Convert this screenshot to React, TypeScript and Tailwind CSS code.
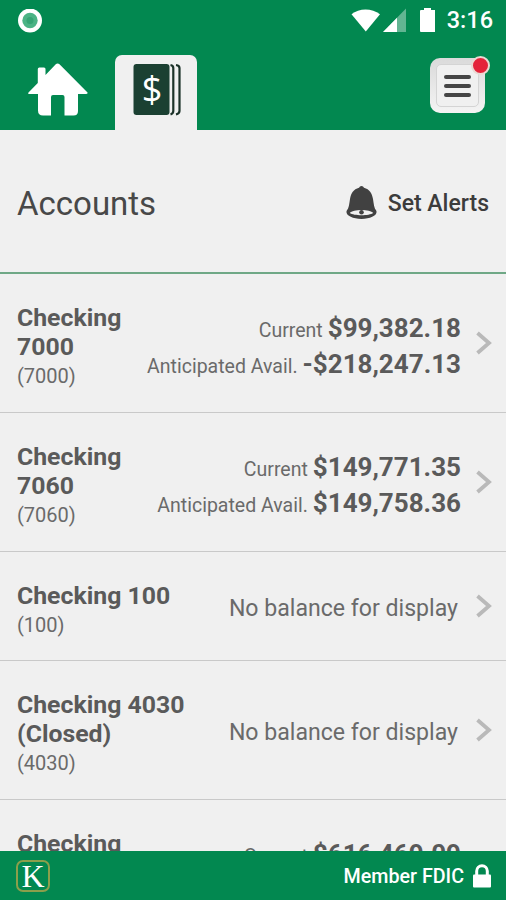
type Balance = { label: string; amount: string };

type Account = {
  name: string[];
  number: string;
  balances?: Balance[];
};

const accounts: Account[] = [
  {
    name: ["Checking", "7000"],
    number: "7000",
    balances: [
      { label: "Current", amount: "$99,382.18" },
      { label: "Anticipated Avail.", amount: "-$218,247.13" },
    ],
  },
  {
    name: ["Checking", "7060"],
    number: "7060",
    balances: [
      { label: "Current", amount: "$149,771.35" },
      { label: "Anticipated Avail.", amount: "$149,758.36" },
    ],
  },
  { name: ["Checking 100"], number: "100" },
  { name: ["Checking 4030", "(Closed)"], number: "4030" },
  {
    name: ["Checking"],
    number: "",
    balances: [{ label: "Current", amount: "$616,469.09" }],
  },
];

function StatusBar() {
  return (
    <div className="flex h-[42px] items-center pl-[18px] pr-[13px] text-white">
      <svg width="25" height="25" viewBox="0 0 25 25">
        <circle cx="12" cy="11.500" r="12" fill="#fff" />
        <circle cx="12" cy="11.500" r="7.700" fill="#4bb385" />
        <circle cx="12" cy="11.500" r="3.500" fill="#36a474" />
      </svg>
      <svg className="ml-auto" width="86" height="26" viewBox="0 0 86 26" fill="#fff">
        <path d="M2.500 6.200C10-.2 23-.2 31 6.200L16.800 23.500z" />
        <path d="M57 .5v23.500H34z" fillOpacity=".38" />
        <path d="M48 9.700V24H34z" />
        <path d="M75 0h7v2h3.500q1 0 1 1V23q0 1-1 1H72q-1 0-1-1V3q0-1 1-1H75z" />
      </svg>
      <span className="ml-[12px] text-[23.500px] leading-none font-medium">3:16</span>
    </div>
  );
}

function NavTabs() {
  return (
    <nav className="flex h-[88px] items-end">
      <button className="flex h-[76px] w-[115px] justify-center pt-[9px]">
        <svg width="60" height="53" viewBox="0 0 60 53" fill="#fff">
          <path d="M28 .9Q30 0 31.500 1.200L59.500 29.500Q60 31 58 31H50v17q0 4.500-4.500 4.500H36.500V34q0-2-2-2H25q-2 0-2 2v18.500h-8q-5 0-5-5V31H1q-1.500-.4-.5-1.500L9.800 20V6q0-1.500 1.500-1.500H16q1.500 0 1.500 1.500v6z" />
        </svg>
      </button>
      <button className="mt-auto flex h-[75px] w-[82px] justify-center rounded-t-[7px] bg-[#f0f0f0] pt-[8px]">
        <svg className="ml-px" width="48" height="53" viewBox="0 0 48 53">
          <rect x=".5" y="1" width="36" height="51" rx="3" fill="#1b4032" />
          <path d="M37.500 2q2.800.5 2.800 3v43q0 2.500-2.800 3.500M43 2q3.500.5 3.500 3v43q0 2.500-3.500 3.500" fill="none" stroke="#1c3229" strokeWidth="2.200" />
          <text x="19" y="38.500" textAnchor="middle" fill="#fff" fontSize="36" fontFamily="'Open Sans', sans-serif">
            $
          </text>
        </svg>
      </button>
      <button className="relative mr-[21px] mb-[17px] ml-auto flex size-[55px] items-center justify-center rounded-[10px] bg-linear-to-b from-[#dadada] to-[#f4f4f4]">
        <span className="flex h-[43px] w-[43px] flex-col items-center justify-center gap-[5px] rounded-[5px] border border-[#d4d4d4] bg-[#f0f0f0]">
          <span className="h-[4px] w-[27px] rounded-full bg-[#454545]" />
          <span className="h-[4px] w-[27px] rounded-full bg-[#454545]" />
          <span className="h-[4px] w-[27px] rounded-full bg-[#454545]" />
        </span>
        <span className="absolute -top-[2px] -right-[5px] size-[19px] rounded-full border-2 border-[#ead9d3] bg-[#e4233a]" />
      </button>
    </nav>
  );
}

function Bell() {
  return (
    <svg className="-mt-[2px]" width="31" height="34" viewBox="0 0 31 34">
      <path
        d="M15.500 0q1.800 0 2.500 1.800c5.500 1.500 8 5.500 9 11.200.8 5 1 9 3.300 11.800C32 29 25 33 15.500 33S-1 29 .7 24.800C3 22 3.200 18 4 13 5 7.300 7.500 3.300 13 1.800Q13.700 0 15.500 0z"
        fill="#414141"
      />
      <path d="M3.800 27c3-4 20.400-4 23.400 0-4 3-19.400 3-23.400 0z" fill="#f0f0f0" />
      <circle cx="15.500" cy="26.300" r="2.300" fill="#414141" />
    </svg>
  );
}

function AccountRow({ account }: { account: Account }) {
  const tall = account.name.length > 1 || account.balances;

  return (
    <li
      className={`flex shrink-0 items-start border-b border-[#c9c9c9] pt-[29px] pr-[14px] pl-[17px] text-[#5a5a5a] ${
        tall ? "h-[139px]" : "h-[109px]"
      }`}
    >
      <div className="shrink-0">
        {account.name.map((line) => (
          <p key={line} className="text-[24.800px] leading-[29px] font-bold">
            {line}
          </p>
        ))}
        {account.number && <p className="text-[20px] leading-[30px] text-[#6a6a6a]">({account.number})</p>}
      </div>

      {account.balances ? (
        <div className="mt-[7px] ml-auto text-right whitespace-nowrap">
          {account.balances.map((balance) => (
            <p
              key={balance.label}
              className="flex h-[36px] items-baseline justify-end gap-[5px] text-[19.500px] leading-[36px] text-[#6a6a6a]"
            >
              {balance.label} <b className="text-[26px] text-[#5a5a5a]">{balance.amount}</b>
            </p>
          ))}
        </div>
      ) : (
        <p className="mr-[3px] ml-auto -translate-y-[11px] self-center text-[23.100px] text-[#6a6a6a]">
          No balance for display
        </p>
      )}

      <svg
        className="ml-[15px] -translate-y-[15px] self-center"
        width="16"
        height="24"
        viewBox="0 0 16 24"
        fill="none"
        stroke="#b9b9b9"
        strokeWidth="3.800"
      >
        <path d="M1.500 2L13 12 1.500 22" />
      </svg>
    </li>
  );
}

export default function App() {
  return (
    <div className="flex h-[900px] w-[506px] flex-col overflow-hidden bg-[#f0f0f0] font-['Roboto',sans-serif]">
      <header className="shrink-0 bg-[#028850]">
        <StatusBar />
        <NavTabs />
      </header>

      <main className="flex min-h-0 flex-1 flex-col overflow-hidden">
        <div className="flex h-[144px] shrink-0 items-center border-b-2 border-[#6fa886] pt-[6px] pr-[17px] pl-[17px]">
          <h1 className="text-[33px] text-[#484848]">Accounts</h1>
          <button className="ml-auto flex items-center gap-[11px] text-[23px] font-medium text-[#3c3c3c]">
            <Bell />
            Set Alerts
          </button>
        </div>
        <ul className="flex flex-col">
          {accounts.map((account, index) => (
            <AccountRow key={index} account={account} />
          ))}
        </ul>
      </main>

      <footer className="flex h-[49px] shrink-0 items-center bg-[#028850] pr-[15px] pl-[16px] text-white">
        <span className="flex h-[32px] w-[34px] items-center justify-center rounded-[7px] border-2 border-[#8b9f4b] font-['Liberation_Serif',serif] text-[32px] leading-none">
          K
        </span>
        <span className="mt-[3px] ml-auto text-[19.700px] font-medium">Member FDIC</span>
        <svg className="ml-[9px]" width="18" height="24" viewBox="0 0 18 24">
          <path d="M3.700 11V7a5.300 5.300 0 0 1 10.600 0v4" fill="none" stroke="#fff" strokeWidth="3" />
          <rect y="10.500" width="18" height="13" rx="1" fill="#fff" />
        </svg>
      </footer>
    </div>
  );
}
